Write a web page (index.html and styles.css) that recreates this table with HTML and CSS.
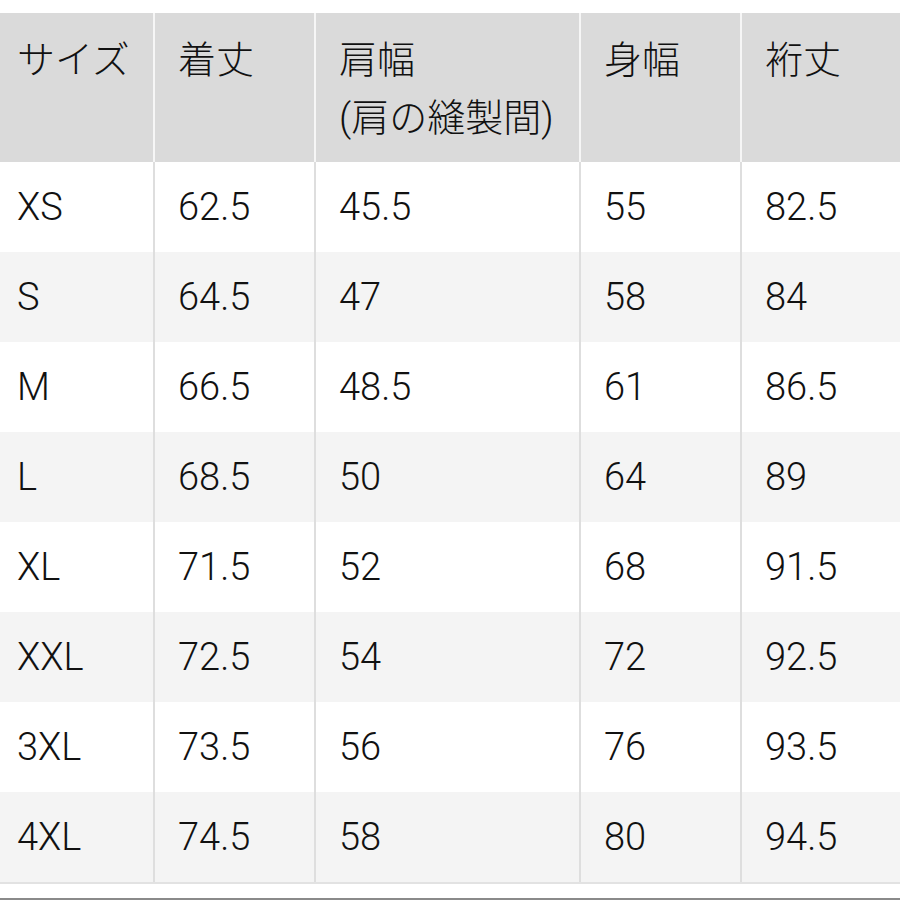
FILE: index.html
```html
<!DOCTYPE html>
<html lang="ja">
<head>
<meta charset="utf-8">
<title>サイズ表</title>
<link rel="stylesheet" href="styles.css">
</head>
<body>
<div class="size-table">
  <div class="row head">
    <div class="cell">サイズ</div>
    <div class="cell">着丈</div>
    <div class="cell">肩幅<br>(肩の縫製間)</div>
    <div class="cell">身幅</div>
    <div class="cell">裄丈</div>
  </div>
  <div class="row"><div class="cell">XS</div><div class="cell">62.5</div><div class="cell">45.5</div><div class="cell">55</div><div class="cell">82.5</div></div>
  <div class="row alt"><div class="cell">S</div><div class="cell">64.5</div><div class="cell">47</div><div class="cell">58</div><div class="cell">84</div></div>
  <div class="row"><div class="cell">M</div><div class="cell">66.5</div><div class="cell">48.5</div><div class="cell">61</div><div class="cell">86.5</div></div>
  <div class="row alt"><div class="cell">L</div><div class="cell">68.5</div><div class="cell">50</div><div class="cell">64</div><div class="cell">89</div></div>
  <div class="row"><div class="cell">XL</div><div class="cell">71.5</div><div class="cell">52</div><div class="cell">68</div><div class="cell">91.5</div></div>
  <div class="row alt"><div class="cell">XXL</div><div class="cell">72.5</div><div class="cell">54</div><div class="cell">72</div><div class="cell">92.5</div></div>
  <div class="row"><div class="cell">3XL</div><div class="cell">73.5</div><div class="cell">56</div><div class="cell">76</div><div class="cell">93.5</div></div>
  <div class="row alt"><div class="cell">4XL</div><div class="cell">74.5</div><div class="cell">58</div><div class="cell">80</div><div class="cell">94.5</div></div>
</div>
<div class="bottom-rule"></div>
</body>
</html>
```
FILE: styles.css
```css
* { box-sizing: border-box; }
html, body {
  margin: 0;
  padding: 0;
  background: #ffffff;
}
body {
  width: 900px;
  height: 900px;
  overflow: hidden;
  font-family: Roboto, "Liberation Sans", "Noto Sans CJK JP", sans-serif;
  font-weight: 300;
  font-size: 38px;
  color: #111111;
}
.size-table {
  margin-top: 13px;
  border-bottom: 2px solid #e2e2e2;
}
.row {
  display: grid;
  grid-template-columns: 155px 161px 265px 161px 158px;
  height: 90px;
  background: #ffffff;
}
.row.alt {
  background: #f4f4f4;
}
.row.head {
  height: 149px;
  background: #dadada;
}
.cell {
  display: flex;
  align-items: center;
  padding-left: 23px;
  border-right: 2px solid #dedede;
  white-space: nowrap;
}
.cell:first-child {
  padding-left: 17px;
}
.cell:last-child {
  border-right: none;
}
.head .cell {
  display: block;
  border-right-color: #f6f6f6;
  padding-top: 18px;
  line-height: 58px;
}
.bottom-rule {
  margin-top: 14px;
  height: 2px;
  background: #8a8a8a;
}
```
